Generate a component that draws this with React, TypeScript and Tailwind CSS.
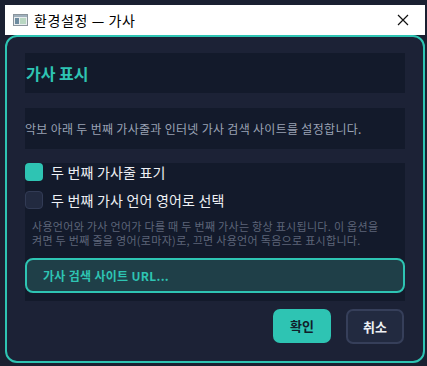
import React from "react";

const font = { fontFamily: '"Noto Sans CJK KR", "Noto Sans", sans-serif' };

function TitleBar() {
  return (
    <div className="flex h-[30px] items-center bg-white pl-[8px] pr-[10px]">
      <svg width="15" height="12" viewBox="0 0 15 12" className="mr-[6px]">
        <rect x="0.5" y="0.5" width="14" height="11" fill="#e8ecef" stroke="#8a949c" />
        <rect x="1" y="1" width="13" height="2" fill="#9fb0bc" />
        <rect x="2" y="4" width="4" height="6" fill="#6d8b9f" />
        <rect x="7" y="4" width="6" height="6" fill="#b9d7c2" />
      </svg>
      <span className="text-[14px] tracking-[0.6px] text-black">환경설정 — 가사</span>
      <svg width="12" height="12" viewBox="0 0 12 12" className="ml-auto mr-[6px]">
        <path d="M1 1L11 11M11 1L1 11" stroke="#111" strokeWidth="1.2" />
      </svg>
    </div>
  );
}

function Checkbox({ checked, label }: { checked: boolean; label: string }) {
  return (
    <div className="flex h-[18px] items-center gap-[8px]">
      <div
        className={
          checked
            ? "h-[18px] w-[18px] rounded-[4px] bg-[#2ec4b3]"
            : "h-[18px] w-[18px] rounded-[4px] border border-[#323b55] bg-[#222a40]"
        }
      />
      <span className="text-[14px] tracking-[0.2px] text-[#eef0f4]">{label}</span>
    </div>
  );
}

export default function App() {
  return (
    <div className="h-[366px] w-[427px] overflow-hidden bg-[#1a2031] pl-[5px] pt-[5px]" style={font}>
      <div className="w-[420px]">
        <TitleBar />
        <div className="flex h-[328px] flex-col rounded-[12px] border-2 border-[#2ec4b3] bg-[#1c2236] px-[18px] pt-[16px]">
          <div className="flex h-[40px] items-center bg-[#131a2b] px-[1px]">
            <span className="text-[16px] font-bold text-[#2ec4b3]">가사 표시</span>
          </div>
          <div className="mt-[15px] flex h-[41px] items-center bg-[#131a2b]">
            <span className="text-[12px] tracking-[0.3px] text-[#9aa2b4]">
              악보 아래 두 번째 가사줄과 인터넷 가사 검색 사이트를 설정합니다.
            </span>
          </div>
          <div className="mt-[14px] flex flex-col bg-[#131a2b] pb-[8px]">
            <Checkbox checked label="두 번째 가사줄 표기" />
            <div className="mt-[10px]">
              <Checkbox checked={false} label="두 번째 가사 언어 영어로 선택" />
            </div>
            <div className="mt-[10px] flex flex-col pl-[7px] text-[11px] leading-[14px] tracking-[0.3px] text-[#5d6579]">
              <span className="whitespace-nowrap">
                사용언어와 가사 언어가 다를 때 두 번째 가사는 항상 표시됩니다. 이 옵션을
              </span>
              <span className="whitespace-nowrap">
                켜면 두 번째 줄을 영어(로마자)로, 끄면 사용언어 독음으로 표시합니다.
              </span>
            </div>
            <div className="mt-[11px] flex h-[35px] items-center rounded-[8px] border-2 border-[#2ec4b3] bg-[#1f3f48] pl-[16px]">
              <span className="text-[12px] font-bold tracking-[0.3px] text-[#2ec4b3]">가사 검색 사이트 URL...</span>
            </div>
          </div>
          <div className="mt-[8px] flex justify-end gap-[15px] pr-[1px]">
            <button className="h-[34px] w-[58px] rounded-[7px] bg-[#2ec4b3] text-[13px] font-bold text-[#10202a]">
              확인
            </button>
            <button className="h-[35px] w-[58px] rounded-[7px] border-2 border-[#363f5a] bg-[#222a40] text-[13px] font-bold text-[#eef0f4]">
              취소
            </button>
          </div>
        </div>
      </div>
    </div>
  );
}
